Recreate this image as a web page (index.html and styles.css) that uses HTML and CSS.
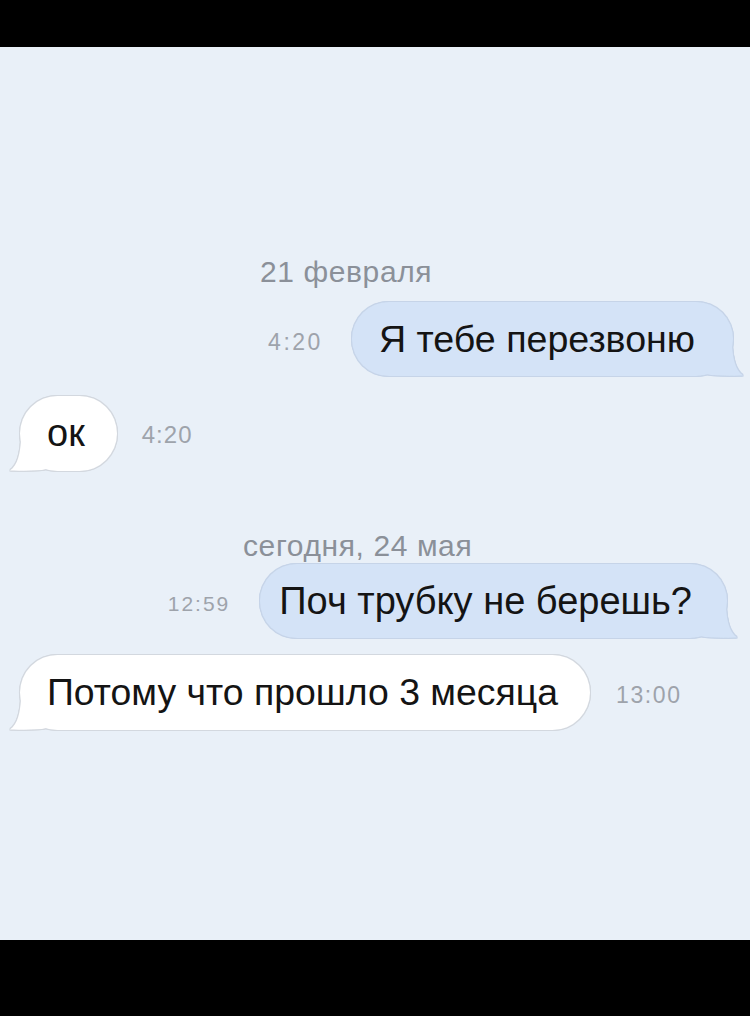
FILE: index.html
```html
<!DOCTYPE html>
<html lang="ru">
<head>
<meta charset="utf-8">
<title>Чат</title>
<link rel="stylesheet" href="styles.css">
</head>
<body>
<div class="screen">
  <div class="date date-1">21 февраля</div>

  <div class="row row-out row-1">
    <span class="time time-a">4:20</span>
    <div class="bubble out">
      <div class="bubble-bg"><svg class="tail" viewBox="0 0 40 30" width="40" height="30"><path d="M29 0 C30 12 32 24 40 29.6 C30 30 20 29.6 8 29 L0 27 L0 0 Z"/></svg></div>
      <span class="bubble-text">Я тебе перезвоню</span>
    </div>
  </div>

  <div class="row row-in row-2">
    <div class="bubble in">
      <div class="bubble-bg"><svg class="tail" viewBox="0 0 40 30" width="40" height="30"><path d="M29 0 C30 12 32 24 40 29.6 C30 30 20 29.6 8 29 L0 27 L0 0 Z"/></svg></div>
      <span class="bubble-text">ок</span>
    </div>
    <span class="time time-b">4:20</span>
  </div>

  <div class="date date-2">сегодня, 24 мая</div>

  <div class="row row-out row-3">
    <span class="time time-c">12:59</span>
    <div class="bubble out">
      <div class="bubble-bg"><svg class="tail" viewBox="0 0 40 30" width="40" height="30"><path d="M29 0 C30 12 32 24 40 29.6 C30 30 20 29.6 8 29 L0 27 L0 0 Z"/></svg></div>
      <span class="bubble-text">Поч трубку не берешь?</span>
    </div>
  </div>

  <div class="row row-in row-4">
    <div class="bubble in">
      <div class="bubble-bg"><svg class="tail" viewBox="0 0 40 30" width="40" height="30"><path d="M29 0 C30 12 32 24 40 29.6 C30 30 20 29.6 8 29 L0 27 L0 0 Z"/></svg></div>
      <span class="bubble-text">Потому что прошло 3 месяца</span>
    </div>
    <span class="time time-d">13:00</span>
  </div>
</div>
</body>
</html>
```

FILE: styles.css
```css
* { box-sizing: border-box; }

html, body {
  margin: 0;
  padding: 0;
  background: #000;
}

body {
  width: 750px;
  height: 1016px;
  font-family: "Liberation Sans", Arial, Helvetica, sans-serif;
}

.screen {
  margin-top: 47px;
  height: 893px;
  background: #e9f0f8;
  padding-top: 208px;
  display: flex;
  flex-direction: column;
}

.date {
  font-size: 30px;
  line-height: 34px;
  letter-spacing: 0.6px;
  color: #8b9099;
}

.date-1 { padding-left: 260px; }
.date-2 { padding-left: 243px; margin-top: 58px; }

.row {
  display: flex;
  align-items: center;
}

.row-out { justify-content: flex-end; }
.row-in { justify-content: flex-start; padding-left: 20px; }

.row-1 { margin-top: 13px; padding-right: 17px; }
.row-2 { margin-top: 20px; }
.row-3 { margin-top: 1px; padding-right: 23px; }
.row-4 { margin-top: 17px; }

.time {
  color: #9ea3ab;
  font-size: 21px;
  line-height: 24px;
  padding-top: 6px;
}

.time-a { font-size: 23px; letter-spacing: 2.5px; margin-right: 29px; }
.time-b { margin-left: 25px; font-size: 24px; letter-spacing: 1px; padding-top: 2px; }
.time-c { margin-right: 30px; letter-spacing: 2px; }
.time-d { margin-left: 26px; font-size: 23px; letter-spacing: 1.6px; padding-top: 4px; }

.bubble {
  position: relative;
  padding: 16px 36px 16px 24px;
  font-size: 38px;
  line-height: 42px;
  color: #141414;
}

.row-1 .bubble { padding-left: 27px; padding-right: 38px; font-size: 37.6px; }
.row-3 .bubble { padding-left: 19px; padding-right: 35px; }

.bubble.in { padding: 16px 32px 17px 27px; }
.row-4 .bubble { font-size: 37.4px; }

.bubble-bg {
  position: absolute;
  inset: 0;
  border-radius: 38px;
}

.out .bubble-bg {
  background: #d4e3f7;
  filter: drop-shadow(1px 0 0 #c6d4e8) drop-shadow(-1px 0 0 #c6d4e8) drop-shadow(0 1px 0 #c6d4e8) drop-shadow(0 -1px 0 #c6d4e8);
}

.in .bubble-bg {
  background: #ffffff;
  filter: drop-shadow(1px 0 0 #d3d8df) drop-shadow(-1px 0 0 #d3d8df) drop-shadow(0 1px 0 #d3d8df) drop-shadow(0 -1px 0 #d3d8df);
}

.tail {
  position: absolute;
  bottom: 0;
  display: block;
}

.out .tail {
  right: -10px;
  fill: #d4e3f7;
}

.in .tail {
  left: -10px;
  fill: #ffffff;
  transform: scaleX(-1);
}

.bubble-text {
  position: relative;
  white-space: nowrap;
}
```
